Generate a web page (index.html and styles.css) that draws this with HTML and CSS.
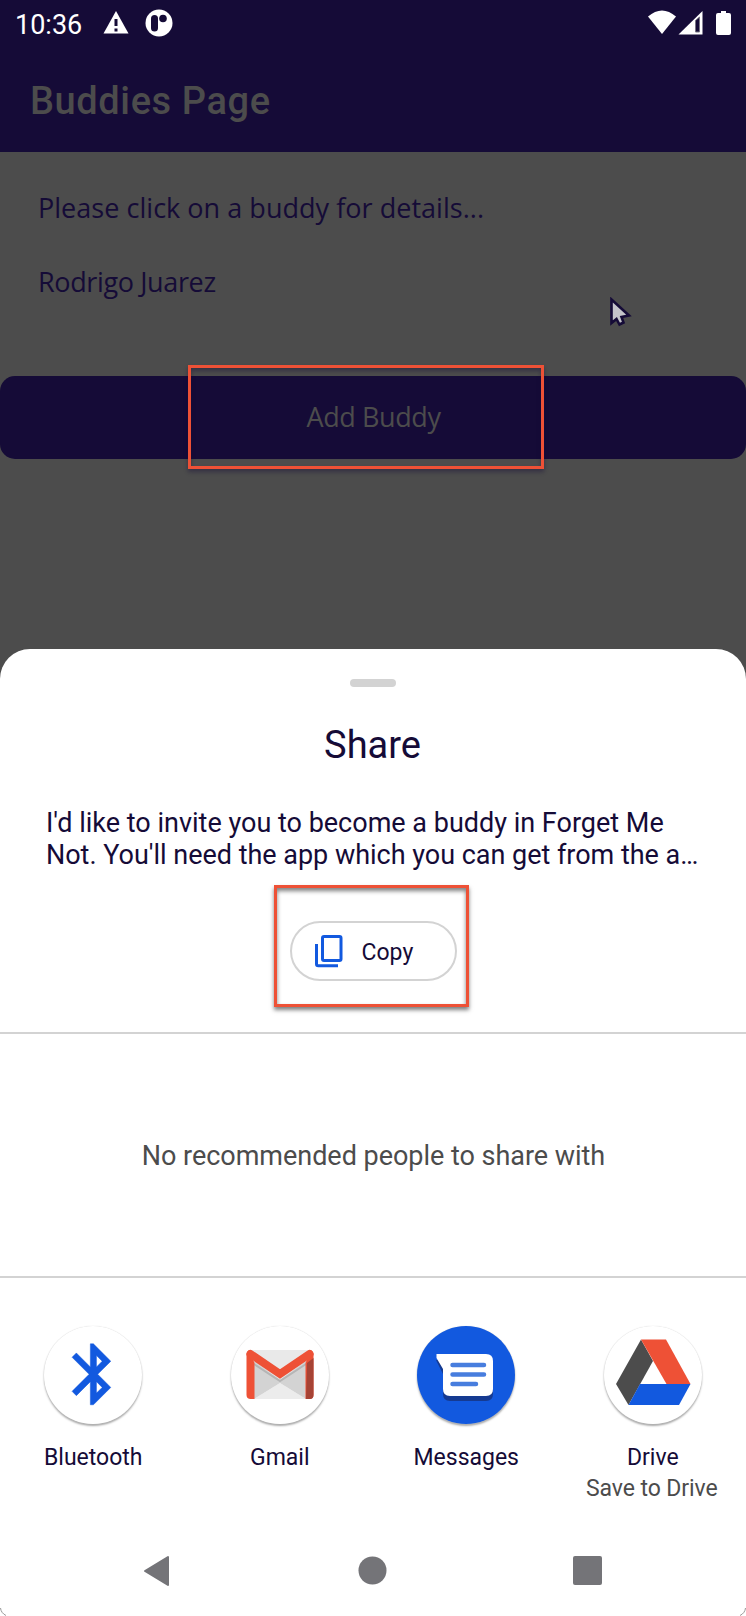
FILE: index.html
```html
<!DOCTYPE html>
<html lang="en">
<head>
<meta charset="utf-8">
<title>Buddies Page</title>
<link rel="stylesheet" href="styles.css">
</head>
<body>
<div class="screen">
  <header class="app-header">
    <div class="status">
      <span class="clock">10:36</span>
      <svg class="warn" width="26" height="23" viewBox="0 0 26 23"><path d="M13 0L25.500 22.500H.5z" fill="#fff"/><path d="M13 8v7M13 17.500v3" stroke="#150b37" stroke-width="3"/></svg>
      <svg class="badge" width="28" height="28" viewBox="0 0 28 28"><circle cx="14" cy="14" r="13.500" fill="#fff"/><rect x="6" y="6" width="7" height="16.500" rx="3.500" fill="#150b37"/><circle cx="18" cy="9.500" r="3.800" fill="#150b37"/></svg>
      <span class="spacer"></span>
      <svg class="signals" width="84" height="26" viewBox="0 0 84 26"><path d="M0 6.500Q14 -5.500 28 6.500L14 24z" fill="#fff"/><path d="M30.500 24.500L54.500 1V24.500z" fill="#fff"/><path d="M47.500 10.500L51.500 7V22H47.500z" fill="#150b37" stroke="#777482" stroke-width="1"/><path d="M73 1h5v2h3q2 0 2 2v18q0 2-2 2H70q-2 0-2-2V5q0-2 2-2h3z" fill="#fff"/></svg>
    </div>
    <h1 class="title">Buddies Page</h1>
  </header>
  <main class="content">
    <p class="line hint">Please click on a buddy for details...</p>
    <p class="line name">Rodrigo Juarez</p>
  </main>
  <div class="add-button"><span>Add Buddy</span></div>
  <section class="sheet">
    <div class="handle"></div>
    <h2 class="share">Share</h2>
    <p class="message"><span>I'd like to invite you to become a buddy in Forget Me</span><br><span class="second">Not. You'll need the app which you can get from the a…</span></p>
    <div class="copy">
      <svg width="28" height="33" viewBox="0 0 28 33" fill="none" stroke="#1259df" stroke-width="3"><rect x="7.500" y="1.500" width="18.500" height="24" rx="1.500"/><path d="M1.500 9v20q0 1.800 1.800 1.800H23"/></svg>
      <span>Copy</span>
    </div>
    <div class="people">No recommended people to share with</div>
    <div class="apps">
      <div class="app">
        <div class="disc"><svg width="98" height="98" viewBox="0 0 98 98"><path transform="translate(12.800 11.700) scale(3.050)" d="M17.710 7.710L12 2h-1v7.590L6.410 5 5 6.410 10.590 12 5 17.590 6.410 19 11 14.410V22h1l5.710-5.710-4.300-4.290 4.300-4.290zM13 5.830l1.880 1.880L13 9.590V5.830zm1.880 10.460L13 18.170v-3.760l1.880 1.880z" fill="#1259df" stroke="#1259df" stroke-width=".15"/></svg></div>
        <span>Bluetooth</span>
      </div>
      <div class="app">
        <div class="disc"><svg width="98" height="98" viewBox="0 0 98 98"><rect x="16" y="24" width="66" height="49" rx="3" fill="#e9e9e9"/><path d="M23 35L49 54L75 35V73L49 57L23 73z" fill="#d3d3d3"/><path d="M49 57L75 73H23z" fill="#ececec"/><path d="M23 38L49 55L75 38" fill="none" stroke="#b5b5b5" stroke-width="2"/><path d="M15.500 28Q16 24 20 24V73Q15.500 73 15.500 69zM82.500 28Q82 24 78 24V73Q82.500 73 82.500 69z" fill="#ee5136"/><path d="M19.500 28V73H23.500V37zM78.500 28V73H74.500V37z" fill="#ee5136"/><path d="M76 37L82.500 32V69Q82.500 73 79 73H75z" fill="#a64335"/><path d="M19.500 28L49 48L78.500 28" fill="none" stroke="#ee5136" stroke-width="8" stroke-linecap="round"/></svg></div>
        <span>Gmail</span>
      </div>
      <div class="app">
        <div class="disc blue"><svg width="98" height="98" viewBox="0 0 98 98"><path transform="translate(0 5)" d="M19 29H70Q76 29 76 35V63Q76 70 69 70H33Q26 70 26 63V43z" fill="#153a91"/><path d="M19.500 28H69Q76 28 76 35V63Q76 70 69 70H33Q26 70 26 63V43L19.500 32z" fill="#fff"/><path d="M35.500 39H67M35.500 48.500H67M35.500 58H59" stroke="#477dde" stroke-width="4.500" stroke-linecap="round"/></svg></div>
        <span>Messages</span>
      </div>
      <div class="app">
        <div class="disc"><svg width="98" height="98" viewBox="0 0 98 98"><path d="M37 13.500L49 35L24.500 79L12 58z" fill="#4c4c4c"/><path d="M37 13.500H62L86.500 58H62.500z" fill="#ee5136"/><path d="M36 58H86.500L75 79H24.500z" fill="#1259df"/></svg></div>
        <span>Drive</span>
        <span class="sub">Save to Drive</span>
      </div>
    </div>
    <nav class="nav">
      <svg width="29" height="32" viewBox="0 0 29 32"><path d="M2 16L25 2V30z" fill="#747478" stroke="#747478" stroke-width="2" stroke-linejoin="round"/></svg>
      <svg width="29" height="29" viewBox="0 0 29 29"><circle cx="14.500" cy="14.500" r="14" fill="#747478"/></svg>
      <svg width="29" height="29" viewBox="0 0 29 29"><rect width="29" height="29" rx="2" fill="#747478"/></svg>
    </nav>
  </section>
  <div class="mark mark-add"></div>
  <div class="mark mark-copy"></div>
  <svg class="cursor" width="22" height="30" viewBox="0 0 22 30"><path d="M1.500 2.500V26L6.500 22L9.500 27.500L13.500 25.500L11.500 20L19 18.500z" fill="#c4c4ca" stroke="#150b37" stroke-width="2.600"/></svg>
  <svg class="corners" width="746" height="8" viewBox="0 0 746 8" fill="none" stroke="#999"><path d="M.5 0Q1 5 6 7.500M745.500 0Q745 5 740 7.500"/></svg>
</div>
</body>
</html>
```

FILE: styles.css
```css
* { box-sizing: border-box; margin: 0; padding: 0; }
body { background: #4c4c4c; font-family: Roboto, sans-serif; color: #150b37; }
svg { display: block; flex: none; }
span { white-space: nowrap; }
.screen { position: relative; width: 746px; height: 1616px; background: #4c4c4c; overflow: hidden; display: flex; flex-direction: column; }
.app-header { height: 152px; background: #150b37; }
.status { display: flex; height: 50px; padding: 0 14px 0 15px; align-items: flex-start; color: #fff; }
.clock { font-size: 27px; line-height: 50px; width: 88px; }
.warn { margin-top: 11px; }
.badge { margin: 9px 0 0 16px; }
.spacer { flex: 1; }
.signals { margin-top: 10px; }
.title { font-size: 38px; font-weight: 500; line-height: 102px; padding-left: 30px; color: #4c4c4c; white-space: nowrap; letter-spacing: .6px; }
.content { padding: 37px 0 0 38px; height: 224px; font-family: "Open Sans", sans-serif; }
.line { font-size: 27px; line-height: 37px; margin-bottom: 37px; white-space: nowrap; }
.hint { letter-spacing: .03px; }
.name { letter-spacing: -.37px; }
.add-button { height: 83px; border-radius: 15px; background: #150b37; color: #4c4c4c; font-family: "Open Sans", sans-serif; font-size: 27px; letter-spacing: -.4px; line-height: 82px; text-align: center; padding-left: 1px; }
.sheet { margin-top: 190px; flex: 1; background: #fff; border-radius: 30px 30px 0 0; display: flex; flex-direction: column; align-items: center; padding-top: 30px; }
.handle { width: 46px; height: 8px; border-radius: 4px; background: #d3d3d3; }
.share { margin: 33px 1px 0 0; font-size: 38px; font-weight: 400; line-height: 50px; }
.message { align-self: stretch; margin-top: 37px; padding-left: 46px; font-size: 27px; line-height: 32px; }
.second { letter-spacing: -.02px; }
.copy { margin-top: 50px; width: 167px; height: 60px; border: 2px solid #d3d3d3; border-radius: 30px; display: flex; padding-left: 23px; font-size: 23px; }
.copy svg { margin-top: 12px; }
.copy span { line-height: 59px; margin-left: 19px; }
.people { align-self: stretch; margin-top: 51px; height: 246px; border-top: 2px solid #d3d3d3; border-bottom: 2px solid #d3d3d3; text-align: center; padding-left: 1px; font-size: 27px; letter-spacing: -.03px; line-height: 244px; color: #4c4c4c; }
.apps { align-self: stretch; display: grid; grid-template-columns: repeat(4, 1fr); padding-top: 48px; height: 247px; }
.app { display: flex; flex-direction: column; align-items: center; font-size: 23px; line-height: 31px; }
.disc { width: 98px; height: 98px; border-radius: 50%; background: #fff; margin-bottom: 18px; box-shadow: 0 0 1px #ccc, 0 2px 2px #aaa; }
.blue { background: #1259df; }
.sub { color: #4c4c4c; letter-spacing: -.08px; margin-right: 2px; }
.nav { align-self: stretch; display: flex; justify-content: space-between; align-items: center; height: 91px; padding: 0 144px 0 143px; }
.mark { position: absolute; border: 3px solid #ee5136; }
.mark-add { left: 188px; top: 365px; width: 356px; height: 104px; box-shadow: 0 3px 4px rgba(21,11,55,.4), inset 0 3px 4px rgba(21,11,55,.4); }
.mark-copy { left: 274px; top: 885px; width: 195px; height: 122px; box-shadow: 0 3px 4px rgba(0,0,0,.5), inset 0 3px 4px rgba(0,0,0,.5); }
.cursor { position: absolute; left: 610px; top: 297px; }
.corners { position: absolute; left: 0; bottom: 0; }
```
